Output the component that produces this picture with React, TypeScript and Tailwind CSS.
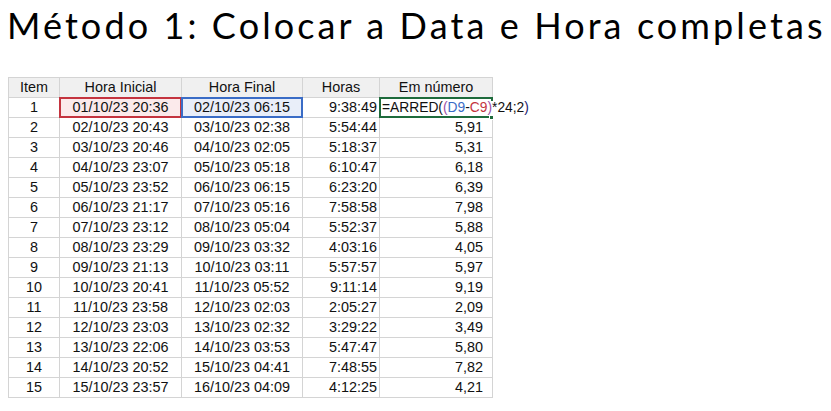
import React from "react";

const rows: [string, string, string, string, string][] = [
  ["1", "01/10/23 20:36", "02/10/23 06:15", "9:38:49", ""],
  ["2", "02/10/23 20:43", "03/10/23 02:38", "5:54:44", "5,91"],
  ["3", "03/10/23 20:46", "04/10/23 02:05", "5:18:37", "5,31"],
  ["4", "04/10/23 23:07", "05/10/23 05:18", "6:10:47", "6,18"],
  ["5", "05/10/23 23:52", "06/10/23 06:15", "6:23:20", "6,39"],
  ["6", "06/10/23 21:17", "07/10/23 05:16", "7:58:58", "7,98"],
  ["7", "07/10/23 23:12", "08/10/23 05:04", "5:52:37", "5,88"],
  ["8", "08/10/23 23:29", "09/10/23 03:32", "4:03:16", "4,05"],
  ["9", "09/10/23 21:13", "10/10/23 03:11", "5:57:57", "5,97"],
  ["10", "10/10/23 20:41", "11/10/23 05:52", "9:11:14", "9,19"],
  ["11", "11/10/23 23:58", "12/10/23 02:03", "2:05:27", "2,09"],
  ["12", "12/10/23 23:03", "13/10/23 02:32", "3:29:22", "3,49"],
  ["13", "13/10/23 22:06", "14/10/23 03:53", "5:47:47", "5,80"],
  ["14", "14/10/23 20:52", "15/10/23 04:41", "7:48:55", "7,82"],
  ["15", "15/10/23 23:57", "16/10/23 04:09", "4:12:25", "4,21"],
];

const cell = "border border-[#d4d4d4] h-[20px] p-0 leading-none";

export default function App() {
  return (
    <div className="w-[831px] h-[411px] bg-white overflow-hidden">
      <div
        className="pl-[7px] pt-[4px] h-[77px] text-[36px] text-black tracking-[3.1px] leading-[42px] whitespace-nowrap"
        style={{ fontFamily: "Lato, 'DejaVu Sans', sans-serif", fontWeight: 400 }}
      >
        Método 1: Colocar a Data e Hora completas
      </div>
      <div className="pl-[8px]">
        <table
          className="border-collapse text-[14.4px] text-[#111]"
          style={{ fontFamily: "'Liberation Sans', Arial, sans-serif" }}
        >
          <colgroup>
            <col className="w-[51px]" />
            <col className="w-[122px]" />
            <col className="w-[121px]" />
            <col className="w-[77px]" />
            <col className="w-[113px]" />
          </colgroup>
          <thead>
            <tr className="bg-[#f0f0f0]">
              <th className={`${cell} font-normal text-center`}>Item</th>
              <th className={`${cell} font-normal text-center`}>Hora Inicial</th>
              <th className={`${cell} font-normal text-center`}>Hora Final</th>
              <th className={`${cell} font-normal text-center`}>Horas</th>
              <th className={`${cell} font-normal text-center`}>Em número</th>
            </tr>
          </thead>
          <tbody>
            {rows.map((r, i) => (
              <tr key={r[0]}>
                <td className={`${cell} text-center`}>{r[0]}</td>
                <td className={`${cell} text-center relative ${i === 0 ? "bg-[#fbeaeb]" : ""}`}>
                  {i === 0 && (
                    <span className="absolute left-[-1px] top-[-1px] right-[-1px] bottom-[-1px] border-[2px] border-[#c4343f]" />
                  )}
                  <span className="relative">{r[1]}</span>
                </td>
                <td className={`${cell} text-center relative ${i === 0 ? "bg-[#e9eef9]" : ""}`}>
                  {i === 0 && (
                    <span className="absolute left-[-1px] top-[-1px] right-[-1px] bottom-[-1px] border-[2px] border-[#3a6cc6]" />
                  )}
                  <span className="relative">{r[2]}</span>
                </td>
                <td className={`${cell} text-right pr-[2px]`}>{r[3]}</td>
                <td className={`${cell} text-right pr-[9px] relative`}>
                  {i === 0 ? (
                    <>
                      <span className="absolute left-[-1px] top-[-1px] right-[-1px] bottom-[-1px] border-[2px] border-[#1e6b3c]" />
                      <span className="absolute right-[-2px] bottom-[-3px] w-[5px] h-[5px] bg-[#1e6b3c] border border-white" />
                      <span className="absolute left-[2px] top-[3px] whitespace-nowrap bg-white pr-[1px] text-left text-[13.8px]">
                        <span>=ARRED(</span>
                        <span className="text-[#9b4fa6]">(</span>
                        <span className="text-[#3a6cc6]">D9</span>
                        <span>-</span>
                        <span className="text-[#c4343f]">C9</span>
                        <span className="text-[#9b4fa6]">)</span>
                        <span>*24;2</span>
                        <span className="text-[#1a1a6e]">)</span>
                      </span>
                    </>
                  ) : (
                    r[4]
                  )}
                </td>
              </tr>
            ))}
          </tbody>
        </table>
      </div>
    </div>
  );
}
